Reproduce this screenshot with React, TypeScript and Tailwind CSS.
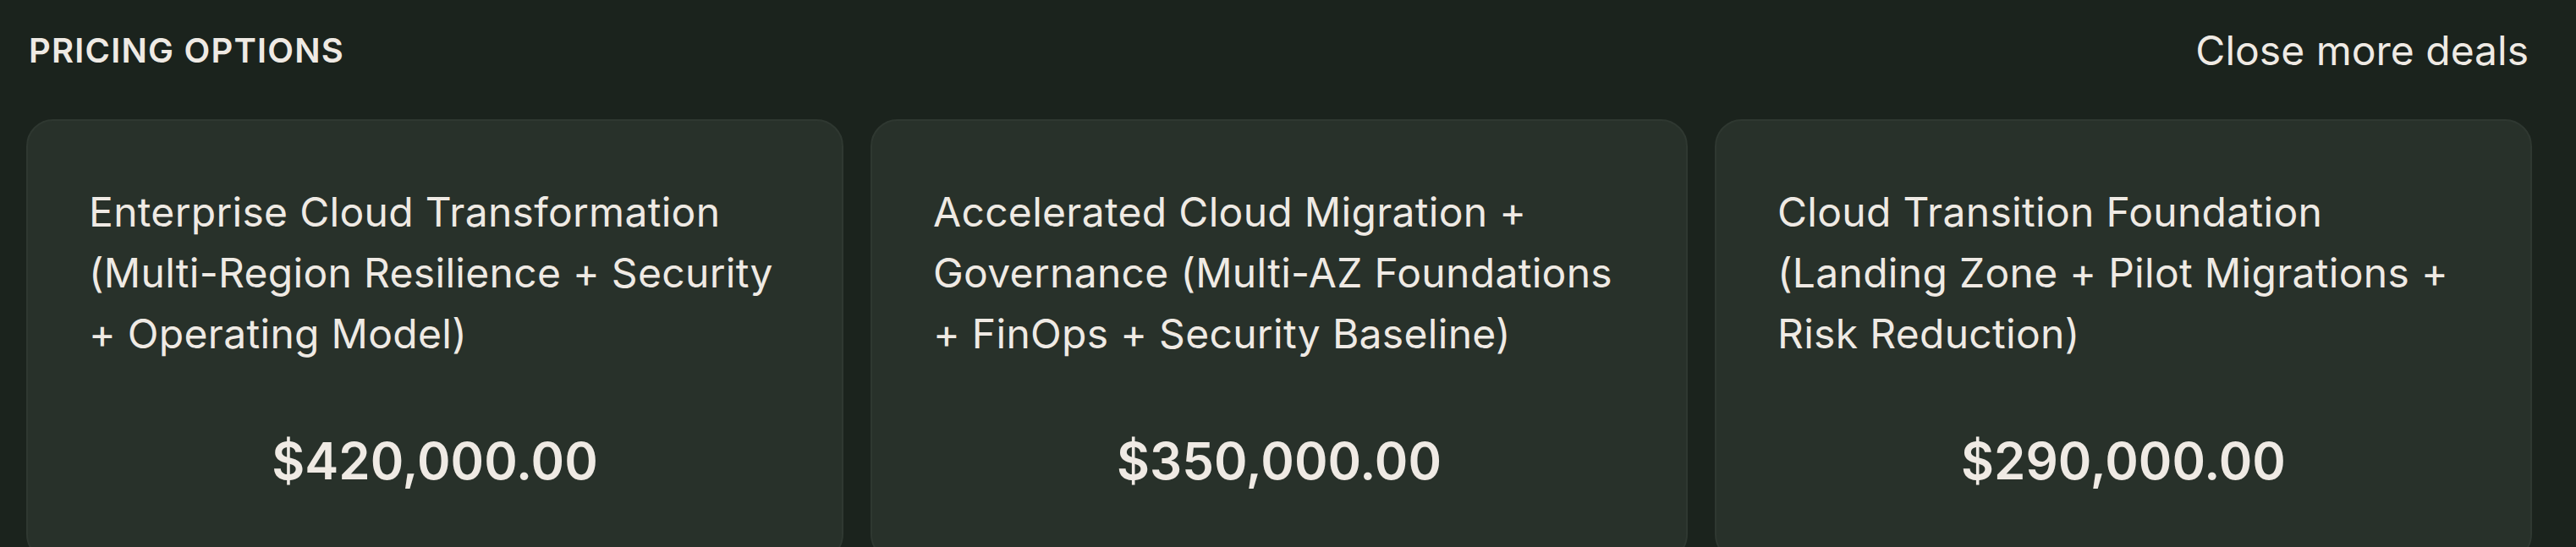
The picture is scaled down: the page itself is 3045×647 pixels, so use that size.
const options = [
  {
    title: 'Enterprise Cloud Transformation (Multi-Region Resilience + Security + Operating Model)',
    price: '$420,000.00',
  },
  {
    title: 'Accelerated Cloud Migration + Governance (Multi-AZ Foundations + FinOps + Security Baseline)',
    price: '$350,000.00',
  },
  {
    title: 'Cloud Transition Foundation (Landing Zone + Pilot Migrations + Risk Reduction)',
    price: '$290,000.00',
  },
];

export default function App() {
  return (
    <div
      className="h-[647px] overflow-hidden bg-[#1b231d] pl-[31px] pr-[52px] pt-6 text-[#efeae4]"
      style={{ fontFamily: 'Inter, "Noto Sans", sans-serif' }}
    >
      {/* Header */}
      <div className="flex h-[72px] items-center justify-between pl-[3px]">
        <h2 className="text-[40px] font-semibold leading-[60px] tracking-[0.03em]">PRICING OPTIONS</h2>
        <span className="pr-1 text-[48px] leading-[72px]">Close more deals</span>
      </div>

      {/* Cards */}
      <div className="mt-[45px] grid grid-cols-3 gap-8">
        {options.map((o) => (
          <div
            key={o.price}
            className="rounded-[32px] border-2 border-[#2f3831] bg-[#28312a] pl-[72px] pr-[70px] pt-[72px] pb-[72px]"
          >
            <p className="text-[48px] leading-[72px] tracking-[0.3px]">{o.title}</p>
            <p className="mt-[69px] pr-[2px] text-center text-[60px] font-semibold leading-[90px]">{o.price}</p>
          </div>
        ))}
      </div>
    </div>
  );
}
